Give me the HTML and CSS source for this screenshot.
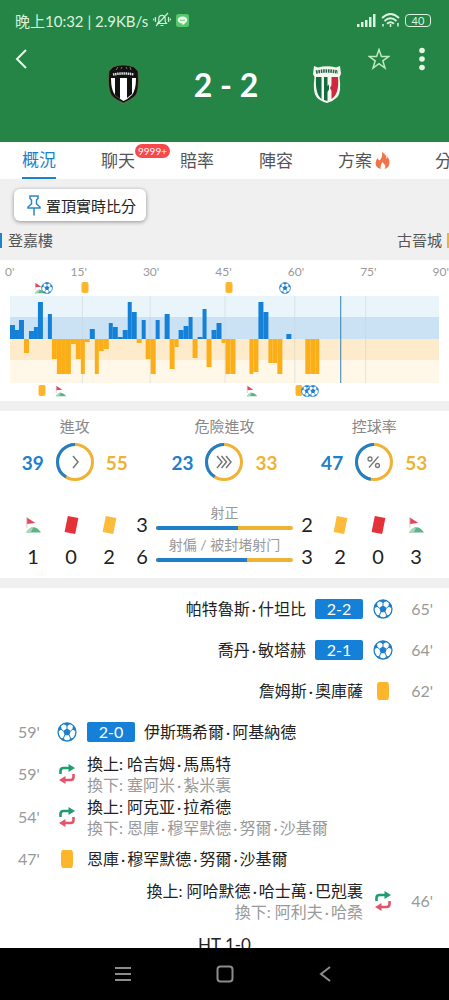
FILE: index.html
```
<!DOCTYPE html>
<html lang="zh-Hant">

<head>
    <meta charset="utf-8">
    <meta name="viewport" content="width=device-width, initial-scale=1.0">
    <title>登嘉樓 2 - 2 古晉城</title>
    <link rel="stylesheet" href="styles.css">
</head>

<body>

    <svg class="symbols" aria-hidden="true">
        <symbol id="ball" viewBox="0 0 20 20">
            <circle cx="10" cy="10" r="9" fill="#fff" stroke="#1f7fc9" stroke-width="1.3" />
            <path d="M10 6.2l3.7 2.7-1.4 4.3H7.7L6.3 8.9z M6 1.8L10 4l4-2.2L10 .8z M19 9.500l-3.600-2 .6-4 2.500 2.600z M1 9.500l3.600-2-.6-4-2.500 2.600z M17 16l-4 .2-1.400 3 3.500-.9z M3 16l4 .2 1.400 3-3.500-.9z" fill="#1f7fc9" />
            <path d="M10 3v3.500M13.500 9l2.500-1.800M12.200 13l1.500 3.500M7.800 13l-1.500 3.500M6.500 9L4 7.200" stroke="#1f7fc9" />
        </symbol>
        <symbol id="flag" viewBox="0 0 18 18">
            <path d="M2 1l9 6-9 1z" fill="#dc4a5e" />
            <path d="M2 1v11" stroke="#e6a9b0" stroke-width=".8" />
            <path d="M1 17q8-11 16 0z" fill="#5db486" />
            <path d="M1 17q4-6 8-6l-3 6z" fill="#a8d5bd" />
        </symbol>
        <symbol id="swap" viewBox="0 0 20 20">
            <path d="M3.500 10V7q0-3 3-3H12" fill="none" stroke="#1f9d6e" stroke-width="2.6" />
            <path d="M11.500 0l6.500 4-6.500 4z" fill="#1f9d6e" />
            <path d="M16.500 10v3q0 3-3 3H8" fill="none" stroke="#e2566b" stroke-width="2.6" />
            <path d="M8.500 12L2 16l6.500 4z" fill="#e2566b" />
        </symbol>
        <symbol id="card" viewBox="0 0 14 17">
            <path d="M3.500 0l10 2-3 15-10-2z" fill="currentColor" />
        </symbol>
    </svg>

    <header>
        <div class="status">
            <span>晚上10:32 | 2.9KB/s</span>
            <svg width="18" height="16" viewBox="0 0 18 16" fill="none" stroke="#cfeed6" stroke-width="1.2">
                <path d="M4.500 11.500h9l-1.300-2V6.500a3.200 3.200 0 0 0-6.400 0v3zM7.500 13.500h3M15 1L3 14M2.500 5v5M.7 6.500v2M15.500 5v5M17.300 6.500v2" />
            </svg>
            <svg class="chat" width="13" height="13" viewBox="0 0 13 13">
                <rect width="13" height="13" rx="2.5" fill="#55c86b" />
                <path d="M6.500 2.500c2.800 0 4.800 1.500 4.800 3.600 0 2-2 3.200-4.800 5.200V9.600C3.700 9.500 1.700 8.100 1.700 6.100s2-3.600 4.800-3.600z" fill="#f1fff2" />
                <path d="M4 6.200h5" stroke="#55c86b" />
            </svg>
            <svg class="signal" width="19" height="13" viewBox="0 0 19 13" fill="#d9f3dd">
                <path d="M0 10h2.500v3H0zM4 8h2.500v5H4zM8 6h2.500v7H8zM12 3h2.500v10H12zM16 0h2.500v13H16z" />
            </svg>
            <svg width="19" height="14" viewBox="0 0 19 14" fill="none" stroke="#d9f3dd" stroke-width="1.8">
                <path d="M1 5q8.500-8 17 0M3.500 8q6-5.500 12 0M6 10.800q3.500-3 7 0" />
                <path d="M9.500 11v3M2 11v2.500M17 10v3.500" stroke-width="1.5" />
            </svg>
            <span class="battery">40</span>
        </div>

        <div class="match">
            <button class="back" aria-label="返回">
                <svg width="12" height="20" viewBox="0 0 12 20" fill="none" stroke="#e9fbe9" stroke-width="2">
                    <path d="M11 1L2 10l9 9" />
                </svg>
            </button>
            <div class="result">
                <svg width="33" height="40" viewBox="0 0 33 40" role="img" aria-label="登嘉樓">
                    <path d="M6 3Q16 -1 27 3l4 4q2 22-4 26-4 3-10.500 6Q9 36 6 33 0 28 2 7z" fill="#111" stroke="#83733d" stroke-width=".6" />
                    <path d="M4 14h25q0 12-4 17-4 4-8.500 6Q11 34 8 31q-4-5-4-17z" fill="#fff" />
                    <path d="M8 14h5v21l-5-4zM20 14h5v16l-5 4z" fill="#111" />
                    <path d="M6 10.500q10.500-2 21 0" fill="none" stroke="#ddd" stroke-width="2.5" stroke-dasharray="1.5 .6" />
                    <path d="M9 6l2-3M14 5l1-2M19 3l1 2M23 3l1 3" stroke="#777" />
                </svg>
                <h1>2 - 2</h1>
                <svg width="30" height="39" viewBox="0 0 30 39" role="img" aria-label="古晉城">
                    <path d="M2 1l4 1.500Q15 0 24 2.500L28 1l1 8-1.500 3q2 15-2 20-4 4-10.500 6Q8 36 4.500 32q-4-5-2-20L1 9z" fill="#f4f8ee" />
                    <path d="M4 12h5.500v22Q3 29 4 12zM12 12h3.500v9l1.500-1.500v5L15.500 27v9l-3.500-1z" fill="#17693f" />
                    <path d="M19.500 12H26q1.500 17-6.500 22v-8l-1.500-3 1.500-3z" fill="#cf2940" />
                    <path d="M4 7q11-2 22 0" fill="none" stroke="#2c6147" stroke-width="3.5" stroke-dasharray="1.6 .8" />
                </svg>
            </div>
            <div class="actions">
                <button aria-label="收藏">
                    <svg width="22" height="22" viewBox="0 0 22 22" fill="none" stroke="#bdebbd" stroke-width="1.5">
                        <path d="M11 1.500l2.400 7h7.300l-5.900 4.300 2.200 7.200-6-4.300L5 20l2.200-7.200L1.300 8.500h7.300z" />
                    </svg>
                </button>
                <button aria-label="更多">
                    <svg width="6" height="24" viewBox="0 0 6 24" fill="#e4f7e2">
                        <circle cx="3" cy="3.5" r="2.8" />
                        <circle cx="3" cy="12" r="2.8" />
                        <circle cx="3" cy="20.5" r="2.8" />
                    </svg>
                </button>
            </div>
        </div>
    </header>

    <nav class="tabs">
        <a class="valgt" href="#oversigt">概況</a>
        <a href="#chat">聊天<span class="count">9999+</span></a>
        <a href="#odds">賠率</a>
        <a href="#lineup">陣容</a>
        <a href="#plan">方案<svg width="15" height="17" viewBox="0 0 15 17">
                <path d="M7 0q5 3 4.500 7 1-1 1-2.500Q15 8 14.500 11.500 13.500 16 9.500 17q2-3-.5-5l-1.500-2Q5 13 5.500 17 .5 15.500.5 11q0-3 2.500-5 0 2 1.500 2.500Q8 5 7 0z" fill="#f27348" />
            </svg></a>
        <a href="#analysis">分析</a>
    </nav>

    <main id="oversigt">
        <section class="teams">
            <button class="pin">
                <svg width="14" height="21" viewBox="0 0 14 21" fill="none" stroke="#2a86c8" stroke-width="1.5">
                    <path d="M3 1h8v2.500L9.500 5v4l3.500 3v1H1v-1l3.500-3V5L3 3.500zM7 13v7.500" />
                </svg>
                置頂實時比分
            </button>
            <div class="names">
                <span class="home">登嘉樓</span>
                <span class="guest">古晉城</span>
            </div>
        </section>

        <section class="chart">
            <div class="minutes">
                <span>0'</span><span>15'</span><span>30'</span><span>45'</span><span>60'</span><span>75'</span><span>90'</span>
            </div>
            <div class="markers" id="top"></div>
            <svg id="pressure" viewBox="0 0 430 87" preserveAspectRatio="none" role="img" aria-label="進攻走勢"></svg>
            <div class="markers" id="bottom"></div>
        </section>

        <section class="stats">
            <div class="rings">
                <div class="stat">
                    <h2>進攻</h2>
                    <div class="ring">
                        <b class="blue">39</b>
                        <svg width="40" height="40" viewBox="0 0 40 40" fill="none">
                            <circle cx="20" cy="20" r="17.5" stroke="#efb234" stroke-width="3" />
                            <circle class="part" cx="20" cy="20" r="17.5" pathLength="94" stroke-dasharray="39 94" />
                            <path d="M18 14l5 6-5 6" stroke="#777" stroke-width="1.5" />
                        </svg>
                        <b class="yellow">55</b>
                    </div>
                </div>
                <div class="stat">
                    <h2>危險進攻</h2>
                    <div class="ring">
                        <b class="blue">23</b>
                        <svg width="40" height="40" viewBox="0 0 40 40" fill="none">
                            <circle cx="20" cy="20" r="17.5" stroke="#efb234" stroke-width="3" />
                            <circle class="part" cx="20" cy="20" r="17.5" pathLength="56" stroke-dasharray="23 56" />
                            <path d="M13 14l5 6-5 6M17.500 14l5 6-5 6M22 14l5 6-5 6" stroke="#777" stroke-width="1.5" />
                        </svg>
                        <b class="yellow">33</b>
                    </div>
                </div>
                <div class="stat">
                    <h2>控球率</h2>
                    <div class="ring">
                        <b class="blue">47</b>
                        <svg width="40" height="40" viewBox="0 0 40 40" fill="none">
                            <circle cx="20" cy="20" r="17.5" stroke="#efb234" stroke-width="3" />
                            <circle class="part" cx="20" cy="20" r="17.5" pathLength="100" stroke-dasharray="47 100" />
                            <path d="M24.500 14.500l-9.500 11" stroke="#777" stroke-width="1.3" />
                            <circle cx="16" cy="17" r="2" stroke="#777" stroke-width="1.3" />
                            <circle cx="23.5" cy="23.5" r="2" stroke="#777" stroke-width="1.3" />
                        </svg>
                        <b class="yellow">53</b>
                    </div>
                </div>
            </div>

            <div class="numbers">
                <svg class="icon" role="img" aria-label="角球"><use href="#flag" /></svg>
                <svg class="icon red" role="img" aria-label="紅牌"><use href="#card" /></svg>
                <svg class="icon gold" role="img" aria-label="黃牌"><use href="#card" /></svg>
                <span>3</span>
                <div class="shots">
                    <label for="on">射正</label>
                    <progress id="on" max="5" value="3">3</progress>
                </div>
                <span>2</span>
                <svg class="icon gold" role="img" aria-label="黃牌"><use href="#card" /></svg>
                <svg class="icon red" role="img" aria-label="紅牌"><use href="#card" /></svg>
                <svg class="icon" role="img" aria-label="角球"><use href="#flag" /></svg>

                <span>1</span>
                <span>0</span>
                <span>2</span>
                <span>6</span>
                <div class="shots">
                    <label for="off">射偏 / 被封堵射门</label>
                    <progress id="off" max="9" value="6">6</progress>
                </div>
                <span>3</span>
                <span>2</span>
                <span>0</span>
                <span>3</span>
            </div>
        </section>

        <section class="events">
            <article class="event away">
                <time>65'</time>
                <svg class="type"><use href="#ball" /></svg>
                <span class="goal">2-2</span>
                <p>帕特魯斯<i>·</i>什坦比</p>
            </article>
            <article class="event away">
                <time>64'</time>
                <svg class="type"><use href="#ball" /></svg>
                <span class="goal">2-1</span>
                <p>喬丹<i>·</i>敏塔赫</p>
            </article>
            <article class="event away">
                <time>62'</time>
                <span class="type booked"></span>
                <p>詹姆斯<i>·</i>奧庫薩</p>
            </article>
            <article class="event">
                <time>59'</time>
                <svg class="type"><use href="#ball" /></svg>
                <span class="goal">2-0</span>
                <p>伊斯瑪希爾<i>·</i>阿基納德</p>
            </article>
            <article class="event change">
                <time>59'</time>
                <svg class="type"><use href="#swap" /></svg>
                <p>換上: 哈吉姆<i>·</i>馬馬特<span class="out">換下: 塞阿米<i>·</i>紮米裏</span></p>
            </article>
            <article class="event change">
                <time>54'</time>
                <svg class="type"><use href="#swap" /></svg>
                <p>換上: 阿克亚<i>·</i>拉希德<span class="out">換下: 恩庫<i>·</i>穆罕默德<i>·</i>努爾<i>·</i>沙基爾</span></p>
            </article>
            <article class="event">
                <time>47'</time>
                <span class="type booked"></span>
                <p>恩庫<i>·</i>穆罕默德<i>·</i>努爾<i>·</i>沙基爾</p>
            </article>
            <article class="event away change">
                <time>46'</time>
                <svg class="type"><use href="#swap" /></svg>
                <p>換上: 阿哈默德<i>·</i>哈士萬<i>·</i>巴剋裏<span class="out">換下: 阿利夫<i>·</i>哈桑</span></p>
            </article>
            <h3>HT 1-0</h3>
        </section>
    </main>

    <footer>
        <button aria-label="選單">
            <svg width="16" height="16" viewBox="0 0 16 16" stroke="#8c8c8c" stroke-width="2">
                <path d="M0 2h16M0 8h16M0 14h16" />
            </svg>
        </button>
        <button aria-label="主畫面">
            <svg width="18" height="18" viewBox="0 0 18 18" fill="none" stroke="#8c8c8c" stroke-width="2">
                <rect x="1.5" y="1.5" width="15" height="15" rx="3" />
            </svg>
        </button>
        <button aria-label="返回上一頁">
            <svg width="12" height="16" viewBox="0 0 12 16" fill="none" stroke="#8c8c8c" stroke-width="2">
                <path d="M11 1L2 8l9 7" />
            </svg>
        </button>
    </footer>

    <script>
        document.addEventListener("DOMContentLoaded", start)

        // one value per minute, home is positive and away is negative
        const minutes = [14, 9, 19, -14, 8, 12, 37, 0, 25, -20, -35, -35, -35, -5, -20, -35, -3, 10, -35, -12,
            -10, 16, 12, 2, 9, 37, 27, -4, 19, -20, -35, 19, 0, 25, -30, -8, 9, 13, 22, -19,
            2, 30, -28, 9, 16, -4, -35, -35, 0, 0, 0, -35, -33, 37, 27, -24, -24, -35, 0, 5,
            0, 0, 0, -35, -35, -35];

        // place is in percent of the chart width
        const markers = [
            { row: "top", type: "flag", place: 7 },
            { row: "top", type: "ball", place: 8.6 },
            { row: "top", type: "booked", place: 17.4 },
            { row: "top", type: "booked", place: 51 },
            { row: "top", type: "ball", place: 64.2 },
            { row: "bottom", type: "booked", place: 7.5 },
            { row: "bottom", type: "flag", place: 11.8 },
            { row: "bottom", type: "flag", place: 56.4 },
            { row: "bottom", type: "booked", place: 67.4 },
            { row: "bottom", type: "ball", place: 69.3 },
            { row: "bottom", type: "ball", place: 70.7 }
        ];

        function start() {
            visGraf();
            visMarkers();
        }

        function rect(x, y, w, h, color) {
            return `<rect x="${x}" y="${y}" width="${w}" height="${h}" fill="${color}" />`;
        }

        function visGraf() {
            let svg = rect(0, 0, 430, 21, "#eaf5fb") + rect(0, 21, 430, 22, "#cbe2f5");
            svg += rect(0, 43, 430, 21, "#fdebcb") + rect(0, 64, 430, 23, "#fff7e8");
            [72, 140, 215, 285, 356].forEach(x => {
                svg += rect(x, 0, 1, 87, "#c4d3dc80");
            });
            minutes.forEach((value, i) => {
                const x = Math.round(i * 4.7);
                const w = Math.round((i + 1) * 4.7) - x;
                if (value > 0) {
                    svg += rect(x, 43 - value, w, value, "#1580d8");
                } else if (value < 0) {
                    svg += rect(x, 43, w, -value, "#fbae17");
                }
            });
            svg += rect(331, 0, 1, 87, "#357fae");
            document.querySelector("#pressure").innerHTML = svg;
        }

        function visMarkers() {
            markers.forEach(marker => {
                const icon = marker.type == "booked" ? "<i></i>" : `<svg><use href="#${marker.type}" /></svg>`;
                document.querySelector("#" + marker.row).innerHTML +=
                    `<span class="marker" style="left: ${marker.place}%">${icon}</span>`;
            });
        }
    </script>
</body>

</html>
```
FILE: styles.css
```
* {
    box-sizing: border-box;
}

body {
    margin: 0;
    height: 100vh;
    display: flex;
    flex-direction: column;
    font-family: Lato, "Noto Sans CJK TC", sans-serif;
    color: #222;
    background-color: white;
}

h1,
h2,
h3,
p {
    margin: 0;
    font-weight: normal;
}

button {
    border: none;
    padding: 0;
    background: none;
    font-family: inherit;
}

a {
    color: inherit;
    text-decoration: none;
}

svg {
    display: block;
}

.symbols {
    position: absolute;
    width: 0;
    height: 0;
}

/* top */
header {
    flex: none;
    height: 142px;
    color: white;
    background-color: #248547;
}

.status {
    display: flex;
    align-items: center;
    gap: 5px;
    height: 40px;
    padding: 0 18px 0 15px;
    font-size: 15px;
    color: #d9f3dd;
}

.signal {
    margin-left: auto;
}

.battery {
    width: 26px;
    height: 13px;
    border: 1px solid #d9f3dd;
    border-radius: 4px;
    font-size: 11px;
    line-height: 11px;
    text-align: center;
}

.match {
    display: grid;
    grid-template-columns: 1fr auto 1fr;
}

.back {
    width: 12px;
    height: 38px;
    margin-left: 15px;
}

.result {
    display: flex;
    align-items: center;
    gap: 53px;
    height: 88px;
}

h1 {
    width: 66px;
    font-size: 32px;
    font-weight: bold;
    text-align: center;
    white-space: nowrap;
}

.actions {
    display: flex;
    justify-content: flex-end;
    align-items: center;
    gap: 29px;
    height: 38px;
    padding-right: 24px;
}

/* tabs */
.tabs {
    flex: none;
    display: flex;
    gap: 45px;
    height: 37px;
    padding-left: 22px;
    overflow: hidden;
    font-size: 17px;
    line-height: 36px;
    color: #555;
    white-space: nowrap;
}

.tabs a {
    display: flex;
    align-items: center;
    flex: none;
    position: relative;
}

.tabs svg {
    margin-left: 3px;
}

.tabs .valgt {
    color: #1c82cc;
    border-bottom: 2px solid #1c82cc;
}

.count {
    position: absolute;
    left: 34px;
    top: 2px;
    padding: 0 3px;
    border-radius: 7px;
    font-size: 10px;
    line-height: 14px;
    color: white;
    background-color: #f9484c;
}

main {
    flex: 1;
    min-height: 0;
    overflow: hidden;
    background-color: #f0f0f0;
}

/* teams */
.teams {
    padding-top: 10px;
}

.pin {
    display: flex;
    align-items: center;
    gap: 5px;
    height: 32px;
    margin-left: 14px;
    padding: 0 10px 0 13px;
    border-radius: 6px;
    font-size: 15px;
    color: #222;
    background-color: white;
    box-shadow: 0 1px 4px #0006;
}

.names {
    display: flex;
    justify-content: space-between;
    padding: 12px 0;
    font-size: 15px;
    line-height: 15px;
    color: #555;
}

.home {
    padding-left: 6px;
    border-left: 2px solid #1c82cc;
}

.guest {
    padding-right: 5px;
    border-right: 2px solid #efb234;
}

/* chart */
.chart {
    height: 141px;
    padding-top: 4px;
    background-color: white;
}

.minutes {
    display: flex;
    justify-content: space-between;
    padding: 0 0 0 5px;
    font-size: 12px;
    line-height: 16px;
    color: #999;
}

.markers {
    position: relative;
    height: 16px;
    margin: 0 10px;
}

.marker {
    position: absolute;
    top: 2px;
    transform: translateX(-50%);
}

.marker svg {
    width: 12px;
    height: 12px;
}

.marker i {
    display: block;
    width: 7px;
    height: 11px;
    border-radius: 2px;
    background-color: #fdb52c;
}

#pressure {
    width: calc(100% - 20px);
    height: 87px;
    margin: 0 10px;
}

/* stats */
.stats {
    margin-top: 10px;
    padding: 6px 0 12px;
    background-color: white;
}

.rings {
    display: grid;
    grid-template-columns: 1fr 1fr 1fr;
    text-align: center;
}

h2 {
    font-size: 15px;
    line-height: 18px;
    color: #888;
}

.ring {
    display: flex;
    justify-content: center;
    align-items: center;
    gap: 11px;
    height: 40px;
    margin-top: 7px;
    font-size: 19px;
}

.part {
    stroke: #1f7fc9;
    stroke-width: 3;
    transform: rotate(-90deg) scaleY(-1);
    transform-origin: center;
}

.blue {
    color: #1f7fc9;
}

.yellow {
    color: #efb234;
}

.numbers {
    display: grid;
    grid-template-columns: 38px 38px 38px 28px 1fr 28px 38px 38px 38px;
    grid-auto-rows: 32px;
    align-items: end;
    justify-items: center;
    margin-top: 20px;
    padding: 0 14px;
    font-size: 20px;
    line-height: 20px;
}

.icon {
    width: 17px;
    height: 18px;
}

.red {
    color: #e53238;
}

.gold {
    color: #fcbb3a;
}

.shots {
    width: 100%;
    padding-bottom: 4px;
    font-size: 14px;
    line-height: 16px;
    text-align: center;
    color: #999;
}

.shots label {
    display: block;
    margin-bottom: 5px;
}

progress {
    display: block;
    width: 100%;
    height: 4px;
    appearance: none;
    border: none;
    border-radius: 2px;
    overflow: hidden;
}

progress::-webkit-progress-bar {
    background-color: #efb234;
}

progress::-webkit-progress-value {
    background-color: #1f7fc9;
}

/* events */
.events {
    margin-top: 10px;
    background-color: white;
}

.event {
    display: flex;
    align-items: center;
    height: 41px;
    padding-left: 18px;
    font-size: 16px;
    line-height: 21px;
}

.event.away {
    flex-direction: row-reverse;
    padding: 0 16px 0 0;
    text-align: right;
}

.event.change {
    height: 43px;
}

/* the dot between two names */
.event i {
    margin: 0 2px;
    font-style: normal;
}

time {
    width: 39px;
    color: #999;
    text-align: left;
}

.away time {
    width: 40px;
    text-align: right;
}

.type {
    flex: none;
    width: 20px;
    height: 20px;
    margin-right: 10px;
}

.away .type {
    margin: 0 0 0 10px;
}

.booked {
    border: solid white;
    border-width: 1px 4px;
    border-radius: 6px;
    background-color: #fdb52c;
}

.goal {
    width: 48px;
    border-radius: 2px;
    line-height: 20px;
    text-align: center;
    color: white;
    background-color: #1580d8;
}

.goal + p {
    margin: 0 9px;
}

.out {
    display: block;
    color: #999;
}

h3 {
    padding-top: 12px;
    font-size: 17px;
    line-height: 22px;
    text-align: center;
}

/* phone buttons */
footer {
    flex: none;
    display: flex;
    justify-content: center;
    align-items: center;
    gap: 85px;
    height: 52px;
    padding-right: 4px;
    background-color: black;
}
```
